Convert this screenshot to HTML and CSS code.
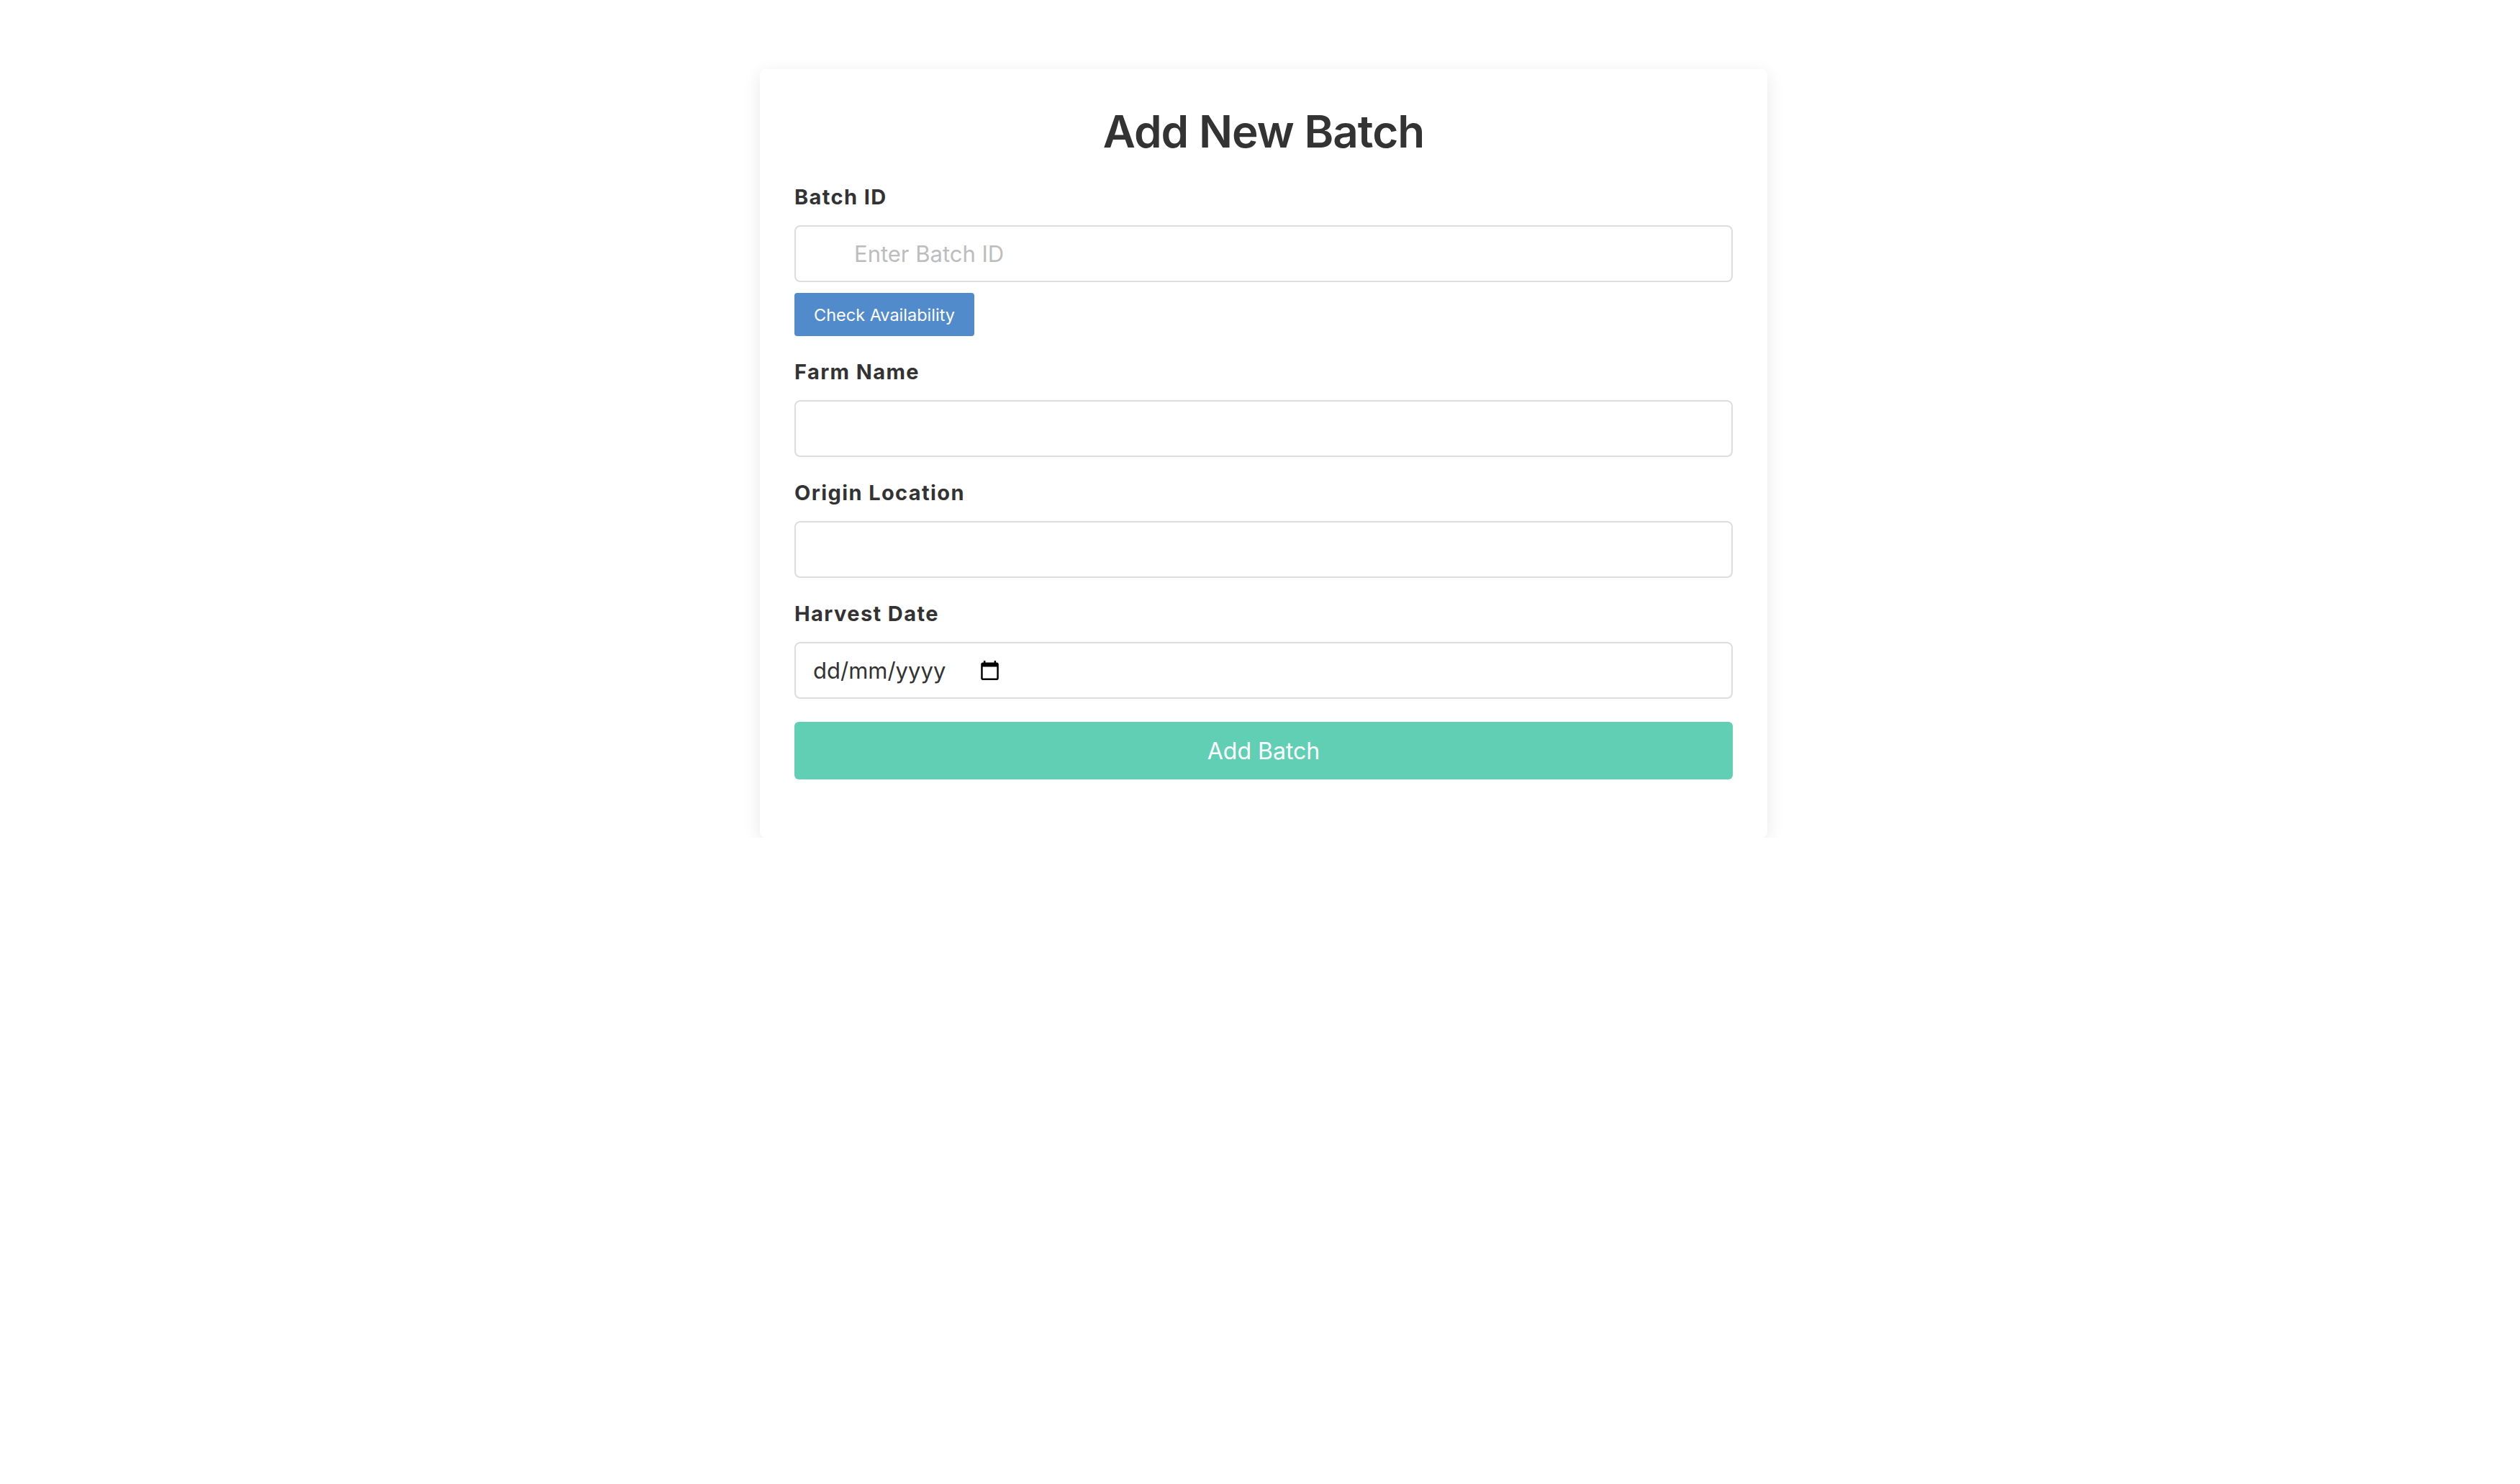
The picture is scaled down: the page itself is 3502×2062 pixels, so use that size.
FILE: index.html
```html
<!DOCTYPE html>
<html lang="en-GB">
<head>
<meta charset="utf-8">
<title>Add New Batch</title>
<link rel="stylesheet" href="styles.css">
</head>
<body>
<div class="page">
  <div class="card">
    <h1 class="title">Add New Batch</h1>
    <form class="form">
      <div class="group">
        <label class="label" for="batch">Batch ID</label>
        <input class="input input-batch" id="batch" type="text" placeholder="Enter Batch ID">
        <button type="button" class="btn-check">Check Availability</button>
      </div>
      <div class="group">
        <label class="label" for="farm">Farm Name</label>
        <input class="input" id="farm" type="text">
      </div>
      <div class="group">
        <label class="label" for="origin">Origin Location</label>
        <input class="input" id="origin" type="text">
      </div>
      <div class="group">
        <label class="label" for="date">Harvest Date</label>
        <div class="input date-field">
          <input class="date-text" id="date" type="text" placeholder="dd/mm/yyyy">
          <svg class="cal-icon" viewBox="2 1 20 22" width="25" height="27" aria-hidden="true">
            <path d="M20 3h-1V1h-2v2H7V1H5v2H4c-1.1 0-2 .9-2 2v16c0 1.1.9 2 2 2h16c1.1 0 2-.9 2-2V5c0-1.1-.9-2-2-2zm0 18H4V8h16v13z" fill="#000"/>
          </svg>
        </div>
      </div>
      <button type="button" class="btn-add">Add Batch</button>
    </form>
  </div>
</div>
</body>
</html>
```
FILE: styles.css
```css
html, body {
  margin: 0;
  padding: 0;
  background: #ffffff;
}
body {
  font-family: Inter, "Noto Sans", "Liberation Sans", sans-serif;
  color: #333333;
}
.page {
  padding: 96px 0 0 10px;
}
.card {
  width: 1400px;
  box-sizing: border-box;
  margin: 0 auto;
  padding: 49px 48px 48px;
  background: #ffffff;
  border-radius: 8px;
  box-shadow: 0 6px 26px rgba(0, 0, 0, 0.09);
}
.title {
  margin: 0 0 36px;
  font-size: 62px;
  font-weight: 600;
  line-height: 75px;
  letter-spacing: -1px;
  text-align: center;
  color: #333333;
}
.form {
  display: flex;
  flex-direction: column;
  margin: 0 0 33px;
}
.group {
  display: flex;
  flex-direction: column;
  align-items: flex-start;
  margin-bottom: 32px;
}
.label {
  display: block;
  font-size: 29px;
  font-weight: 700;
  line-height: 35px;
  letter-spacing: 1.4px;
  margin-bottom: 22px;
  color: #333333;
}
.input {
  width: 100%;
  height: 79px;
  box-sizing: border-box;
  border: 2px solid #dddddd;
  border-radius: 8px;
  padding: 0 24px;
  font-family: Inter, "Noto Sans", "Liberation Sans", sans-serif;
  font-size: 31px;
  color: #333333;
  background: #ffffff;
  outline: none;
}
.input::placeholder {
  color: #bdbdbd;
}
.input-batch {
  padding-left: 81px;
}
.date-field {
  display: flex;
  align-items: center;
}
.date-text {
  width: 186px;
  padding: 0;
  border: none;
  outline: none;
  background: transparent;
  font-family: Inter, "Noto Sans", "Liberation Sans", sans-serif;
  font-size: 31px;
  color: #333333;
}
.date-text::placeholder {
  color: #333333;
  opacity: 1;
}
.cal-icon {
  margin-left: 47px;
  margin-top: -1px;
  flex: none;
}
.btn-check {
  margin-top: 15px;
  height: 60px;
  padding: 0 27px;
  border: none;
  border-radius: 4px;
  background: #528bcb;
  color: #ffffff;
  font-family: Inter, "Noto Sans", "Liberation Sans", sans-serif;
  font-size: 23.5px;
  font-weight: 400;
}
.btn-add {
  width: 100%;
  height: 80px;
  border: none;
  border-radius: 6px;
  background: #60cfb3;
  color: #ffffff;
  font-family: Inter, "Noto Sans", "Liberation Sans", sans-serif;
  font-size: 32px;
  font-weight: 400;
}
```
